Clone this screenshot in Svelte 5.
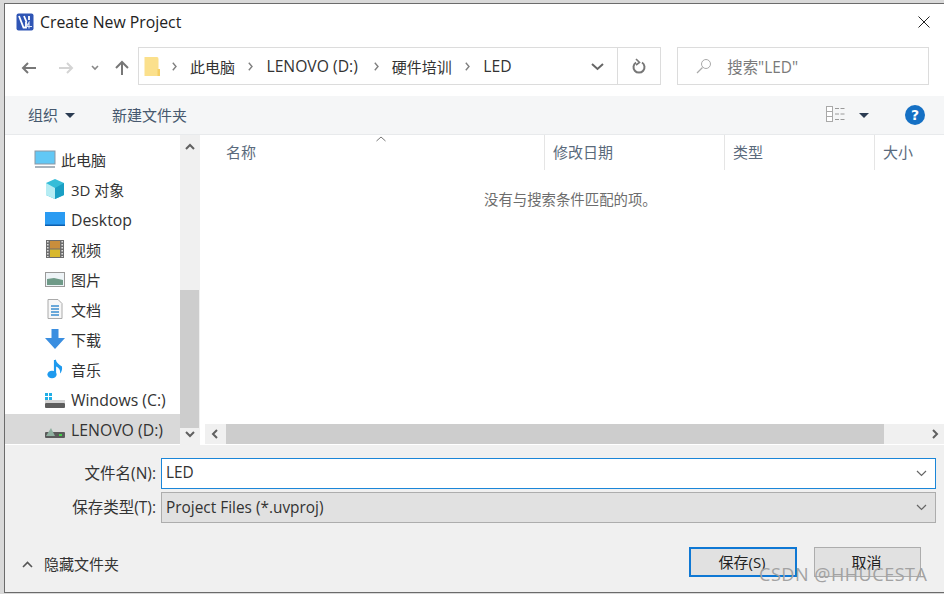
<script>
  const cjk = true;
  const columns = [
    { label: "名称", width: 345 },
    { label: "修改日期", width: 180 },
    { label: "类型", width: 150 },
    { label: "大小", width: 70 }
  ];
  const crumbs = [
    { label: "此电脑" },
    { label: "LENOVO (D:)", latin: true },
    { label: "硬件培训" },
    { label: "LED", latin: true }
  ];
  const navItems = [
    { label: "此电脑", icon: "pc", top: true },
    { label: "3D 对象", icon: "cube" },
    { label: "Desktop", icon: "desktop", latin: true },
    { label: "视频", icon: "video" },
    { label: "图片", icon: "picture" },
    { label: "文档", icon: "doc" },
    { label: "下载", icon: "download" },
    { label: "音乐", icon: "music" },
    { label: "Windows (C:)", icon: "win", latin: true },
    { label: "LENOVO (D:)", icon: "drive", selected: true, latin: true }
  ];
</script>

<div class="page" class:cjk>
  <div class="dialog">
    <header class="titlebar">
      <svg class="appicon" width="18" height="18" viewBox="0 0 18 18">
        <rect x="0.5" y="0.5" width="17" height="17" rx="2" fill="#2f55b5" />
        <path d="M3 3 L7.5 14.5 L10 14.5 L10 9 M8 3 L10.5 9 M13 3 L13 7" stroke="#fff" stroke-width="1.8" fill="none" />
        <path d="M13 15.5 L13 9.5 L10.5 13.5 H16" stroke="#dfe6f7" stroke-width="1.2" fill="none" />
      </svg>
      <span class="title">Create New Project</span>
      <svg class="close" width="12" height="12" viewBox="0 0 12 12">
        <path d="M0.5 0.5 L11.5 11.5 M11.5 0.5 L0.5 11.5" stroke="#222" stroke-width="1" />
      </svg>
    </header>

    <div class="navbar">
      <svg width="16" height="14" viewBox="0 0 16 14" class="back">
        <path d="M15 7 H2 M7 2 L2 7 L7 12" stroke="#777" stroke-width="2" fill="none" />
      </svg>
      <svg width="16" height="14" viewBox="0 0 16 14" class="forward">
        <path d="M1 7 H14 M9 2 L14 7 L9 12" stroke="#d4d4d4" stroke-width="2" fill="none" />
      </svg>
      <svg width="8" height="6" viewBox="0 0 8 6" class="recent">
        <path d="M1 1 L4 4 L7 1" stroke="#888" stroke-width="1.6" fill="none" />
      </svg>
      <svg width="16" height="15" viewBox="0 0 16 15" class="up">
        <path d="M8 15 V2 M2 8 L8 2 L14 8" stroke="#777" stroke-width="2" fill="none" />
      </svg>
      <div class="address">
        <svg width="16" height="21" viewBox="0 0 16 21" class="folder">
          <path d="M0.5 1 H13 Q14.5 1 14.5 3 V20 H0.5 Z" fill="#fbe08c" />
          <rect x="13.5" y="13" width="2.5" height="7" fill="#f5cf66" />
        </svg>
        {#each crumbs as crumb}
          <svg width="5" height="9" viewBox="0 0 5 9" class="sep">
            <path d="M0.8 0.8 L4 4.5 L0.8 8.2" stroke="#808080" stroke-width="1.4" fill="none" />
          </svg>
          <span class="crumb" class:latin={crumb.latin}>{crumb.label}</span>
        {/each}
        <svg width="13" height="8" viewBox="0 0 13 8" class="addr-chev">
          <path d="M1 1 L6.5 6 L12 1" stroke="#666" stroke-width="2" fill="none" />
        </svg>
        <div class="refresh">
          <svg width="14" height="16" viewBox="0 0 14 16">
            <path d="M4 4.5 A5.5 5.5 0 1 0 10 4.5" stroke="#777" stroke-width="2" fill="none" />
            <path d="M4 1 L7.5 4.5 L4 7" stroke="#777" stroke-width="1.6" fill="none" />
          </svg>
        </div>
      </div>
      <div class="search">
        <svg width="16" height="16" viewBox="0 0 16 16">
          <circle cx="10" cy="6" r="4.5" stroke="#aaa" stroke-width="1" fill="none" />
          <path d="M6.5 9.5 L1 15" stroke="#aaa" stroke-width="1.3" />
        </svg>
        <span>搜索"LED"</span>
      </div>
    </div>

    <div class="commands">
      <span class="cmd">组织</span>
      <i class="caret"></i>
      <span class="cmd newfolder">新建文件夹</span>
      <div class="spacer"></div>
      <svg width="21" height="16" viewBox="0 0 21 16" class="views">
        <rect x="0.5" y="0.5" width="6" height="15" fill="#fff" stroke="#a9a9a9" />
        <path d="M1 5.5 H6 M1 10.5 H6" stroke="#a9a9a9" />
        <path d="M9 2.5 H20 M9 8 H20 M9 13.5 H20" stroke="#9a9a9a" stroke-dasharray="4 1.5" />
      </svg>
      <i class="caret view-caret"></i>
      <div class="help">?</div>
    </div>

    <div class="main">
      <nav class="tree">
        {#each navItems as item}
          <div class="tree-row" class:selected={item.selected} class:top={item.top}>
            <svg width="22" height="22" viewBox="0 0 22 22">
              {#if item.icon === "pc"}
                <rect x="1" y="3" width="20" height="13" fill="#62c8f5" stroke="#8c97a3" />
                <rect x="1" y="18" width="20" height="2" fill="#a9b3bc" />
              {:else if item.icon === "cube"}
                <path d="M11 1 L20 5 V17 L11 21 L2 17 V5 Z" fill="#35bdd8" />
                <path d="M2 5 L11 10 V21 L2 17 Z" fill="#b5ecf3" />
                <path d="M11 10 L20 5 V17 L11 21 Z" fill="#1a9fc4" />
              {:else if item.icon === "desktop"}
                <rect x="1" y="4" width="20" height="14" fill="#2a9bf2" />
                <rect x="1" y="16.5" width="20" height="1.5" fill="#0c5fae" />
              {:else if item.icon === "video"}
                <rect x="2" y="2" width="18" height="18" fill="#6d6d6d" />
                <rect x="6" y="3" width="10" height="7.5" fill="#c98e3c" />
                <rect x="6" y="11.5" width="10" height="7.5" fill="#d8b82e" />
                <path d="M3.8 3 V19 M18.2 3 V19" stroke="#ddd" stroke-width="1.6" stroke-dasharray="1.5 1.5" />
              {:else if item.icon === "picture"}
                <rect x="1.5" y="4.5" width="19" height="14" fill="#eef4f7" stroke="#9a9a9a" />
                <path d="M3 11 L10 10 L19 12 V17 H3 Z" fill="#6f9a88" />
              {:else if item.icon === "doc"}
                <path d="M4 1.5 H14 L18 5.5 V20.5 H4 Z" fill="#f7f7f7" stroke="#aaa" />
                <path d="M7 8 H15 M7 11 H15 M7 14 H15 M7 17 H15" stroke="#3d8fd0" stroke-width="1.4" />
              {:else if item.icon === "download"}
                <path d="M7.5 1 H14.5 V10 H21 L11 21 L1 10 H7.5 Z" fill="#3a8ee0" />
              {:else if item.icon === "music"}
                <path d="M11 2 V16" stroke="#1e9aee" stroke-width="2.2" />
                <ellipse cx="8" cy="16.5" rx="4.6" ry="3.8" fill="#1e9aee" />
                <path d="M11 1 Q13 6 18 8.5 Q18.5 13 16 15.5 Q17 10 11 8 Z" fill="#1e9aee" />
              {:else if item.icon === "win"}
                <rect x="1" y="15" width="20" height="5" rx="1" fill="#5d5d5d" />
                <rect x="1" y="12" width="20" height="3" fill="#d5d5d5" />
                <rect x="1" y="5" width="3" height="3" fill="#20aee6" />
                <rect x="5" y="5" width="3" height="3" fill="#20aee6" />
                <rect x="1" y="9" width="3" height="3" fill="#20aee6" />
                <rect x="5" y="9" width="3" height="3" fill="#20aee6" />
              {:else}
                <rect x="1" y="14" width="20" height="6" rx="1" fill="#5a5a5a" />
                <rect x="15" y="16" width="3" height="2" fill="#44d04a" />
                <path d="M2 18 L7 10 L11 18 Z" fill="#8fb0a0" />
              {/if}
            </svg>
            <span class:latin={item.latin}>{item.label}</span>
          </div>
        {/each}
      </nav>

      <div class="vscroll">
        <svg width="10" height="7" viewBox="0 0 10 7" class="arrow">
          <path d="M1 6 L5 2 L9 6" stroke="#606060" stroke-width="2" fill="none" />
        </svg>
        <div class="vtrack"><div class="vthumb"></div></div>
        <svg width="10" height="7" viewBox="0 0 10 7" class="arrow">
          <path d="M1 1 L5 5 L9 1" stroke="#606060" stroke-width="2" fill="none" />
        </svg>
      </div>

      <section class="list">
        <div class="list-head">
          {#each columns as col, i}
            <div class="col" class:last={i === columns.length - 1} style="width: {col.width}px">{col.label}</div>
          {/each}
          <svg width="10" height="6" viewBox="0 0 10 6" class="sort">
            <path d="M0.5 5 L5 1 L9.5 5" stroke="#777" fill="none" />
          </svg>
        </div>
        <p class="empty">没有与搜索条件匹配的项。</p>
        <div class="hscroll">
          <svg width="7" height="10" viewBox="0 0 7 10">
            <path d="M6 1 L2 5 L6 9" stroke="#606060" stroke-width="2" fill="none" />
          </svg>
          <div class="htrack"><div class="hthumb"></div></div>
          <svg width="7" height="10" viewBox="0 0 7 10">
            <path d="M1 1 L5 5 L1 9" stroke="#606060" stroke-width="2" fill="none" />
          </svg>
        </div>
      </section>
    </div>

    <div class="form">
      <div class="field">
        <label for="fname">文件名(N):</label>
        <div class="input active">
          <input id="fname" value="LED" />
          <svg width="11" height="7" viewBox="0 0 11 7"><path d="M1 1 L5.5 5.5 L10 1" stroke="#666" stroke-width="1.2" fill="none" /></svg>
        </div>
      </div>
      <div class="field second">
        <span class="lbl">保存类型(T):</span>
        <div class="input select">
          <span>Project Files (*.uvproj)</span>
          <svg width="11" height="7" viewBox="0 0 11 7"><path d="M1 1 L5.5 5.5 L10 1" stroke="#666" stroke-width="1.2" fill="none" /></svg>
        </div>
      </div>
      <div class="actions">
        <svg width="11" height="7" viewBox="0 0 11 7" class="hide-chev"><path d="M1 6 L5.5 1.5 L10 6" stroke="#555" stroke-width="1.6" fill="none" /></svg>
        <span class="hide">隐藏文件夹</span>
        <div class="spacer"></div>
        <button class="primary">保存(S)</button>
        <button class="cancel">取消</button>
      </div>
      <span class="watermark">CSDN @HHUCESTA</span>
    </div>
  </div>
</div>

<style>
  :global(body) {
    margin: 0;
    background: #d9d9d9;
  }

  .page {
    width: 944px;
    height: 594px;
    padding: 3px 0 1px 4px;
    box-sizing: border-box;
    overflow: hidden;
    font-family: "Open Sans", "Noto Sans CJK SC", sans-serif;
    font-size: 15px;
    color: #333;
  }

  .dialog {
    height: 100%;
    background: #fff;
    border-top: 1px solid #6b6b6b;
    border-left: 1px solid #6b6b6b;
    border-bottom: 1px solid #6b6b6b;
    box-sizing: border-box;
    display: flex;
    flex-direction: column;
    position: relative;
  }

  .titlebar {
    height: 32px;
    display: flex;
    align-items: center;
    padding: 3px 14px 0 11px;
    box-sizing: border-box;
    flex: none;
  }

  .title {
    margin-left: 6px;
    font-size: 15.8px;
    color: #222;
  }

  .close {
    margin-left: auto;
  }

  .navbar {
    height: 60px;
    flex: none;
    display: flex;
    align-items: center;
    box-sizing: border-box;
    padding: 0 15px 0 16px;
  }

  .back,
  .forward,
  .recent,
  .up {
    margin-top: 3px;
  }

  .forward {
    margin-left: 21px;
  }

  .recent {
    margin-left: 17px;
  }

  .up {
    margin-left: 15px;
  }

  .address {
    margin-left: 8px;
    width: 524px;
    height: 38px;
    box-sizing: border-box;
    border: 1px solid #dcdcdc;
    display: flex;
    align-items: center;
    padding-left: 5px;
    color: #333;
  }

  .sep {
    margin-left: 12px;
    flex: none;
  }

  .crumb {
    margin-left: 13px;
    margin-right: 1.5px;
    font-size: 15px;
  }

  .crumb.latin {
    margin-right: 4px;
    font-size: 15.7px;
  }

  .addr-chev {
    margin-left: auto;
    margin-right: 13px;
    margin-top: 2px;
  }

  .refresh {
    width: 42px;
    height: 100%;
    border-left: 1px solid #dcdcdc;
    display: flex;
    align-items: center;
    justify-content: center;
  }

  .search {
    margin-left: 16px;
    width: 252px;
    height: 38px;
    box-sizing: border-box;
    border: 1px solid #dcdcdc;
    display: flex;
    align-items: center;
    padding-left: 18px;
    gap: 15px;
    color: #7a7a7a;
    font-size: 15.4px;
  }

  .commands {
    height: 39px;
    flex: none;
    background: #f5f6f7;
    border-bottom: 1px solid #e8eaec;
    box-sizing: border-box;
    display: flex;
    align-items: center;
    padding: 0 19px 0 23px;
  }

  .cmd {
    color: #46586e;
    font-size: 15px;
    margin-bottom: 2px;
  }

  .caret {
    width: 0;
    height: 0;
    border-left: 5px solid transparent;
    border-right: 5px solid transparent;
    border-top: 5px solid #2b3b52;
    margin-left: 7px;
  }

  .newfolder {
    margin-left: 37px;
  }

  .spacer {
    flex: 1;
  }

  .views {
    margin-bottom: 2px;
  }

  .view-caret {
    margin-left: 12px;
  }

  .help {
    margin-left: 36px;
    width: 20px;
    height: 20px;
    border-radius: 50%;
    background: #1570c4;
    color: #fff;
    font-family: "DejaVu Sans", sans-serif;
    font-weight: 700;
    font-size: 14px;
    line-height: 20px;
    text-align: center;
  }

  .main {
    flex: 1;
    min-height: 0;
    display: flex;
  }

  .tree {
    width: 175px;
    flex: none;
    padding-top: 9px;
    box-sizing: border-box;
  }

  .tree-row {
    height: 30px;
    display: flex;
    align-items: center;
    padding-left: 39px;
    gap: 5px;
    white-space: nowrap;
    color: #333;
    font-size: 15px;
  }

  .tree-row .latin {
    font-size: 15.8px;
    margin-top: 2px;
  }

  .tree-row.top {
    padding-left: 29px;
  }

  .tree-row.selected {
    background: #d9d9d9;
  }

  .vscroll {
    width: 20px;
    flex: none;
    background: #f0f0f0;
    display: flex;
    flex-direction: column;
    align-items: center;
    padding: 8px 0 7px;
    box-sizing: border-box;
  }

  .arrow {
    flex: none;
  }

  .vtrack {
    flex: 1;
    width: 100%;
    position: relative;
  }

  .vthumb {
    position: absolute;
    left: 0;
    right: 1px;
    top: 140px;
    height: 138px;
    background: #cdcdcd;
  }

  .list {
    flex: 1;
    min-width: 0;
    display: flex;
    flex-direction: column;
    position: relative;
    overflow: hidden;
  }

  .list-head {
    display: flex;
    height: 35px;
    flex: none;
    font-size: 15px;
    color: #5a6a7c;
  }

  .col {
    flex: none;
    box-sizing: border-box;
    padding: 6px 0 0 8px;
    border-right: 1px solid #e5e5e5;
  }

  .col:first-child {
    padding-left: 26px;
  }

  .col.last {
    border-right: 0;
  }

  .sort {
    position: absolute;
    left: 176px;
    top: 1px;
  }

  .empty {
    margin: 18px 0 0;
    text-indent: 284px;
    font-size: 14.4px;
    color: #6d6d6d;
    flex: 1;
  }

  .hscroll {
    height: 20px;
    flex: none;
    margin-left: 5px;
    margin-bottom: 1px;
    background: #f0f0f0;
    display: flex;
    align-items: center;
    padding: 0 5px 0 6px;
    gap: 8px;
  }

  .htrack {
    flex: 1;
    height: 100%;
  }

  .hthumb {
    width: 658px;
    height: 100%;
    background: #cdcdcd;
  }

  .form {
    height: 147px;
    flex: none;
    background: #f0f0f0;
    box-sizing: border-box;
    padding-top: 13px;
    display: flex;
    flex-direction: column;
    position: relative;
  }

  .field {
    display: flex;
    align-items: center;
    height: 31px;
  }

  .field.second {
    margin-top: 3px;
  }

  .field label,
  .lbl {
    width: 151px;
    text-align: right;
    font-size: 15.5px;
    color: #333;
    flex: none;
    margin-bottom: 2px;
  }

  .input {
    width: 775px;
    margin-left: 5px;
    height: 31px;
    box-sizing: border-box;
    display: flex;
    align-items: center;
    padding: 0 8px 0 4px;
    justify-content: space-between;
    font-size: 15.4px;
  }

  .input > input {
    margin-bottom: 2px;
  }

  .input.active {
    background: #fff;
    border: 1px solid #1b86d8;
  }

  .input.select {
    background: #e1e1e1;
    border: 1px solid #adadad;
    color: #333;
  }

  input {
    border: 0;
    outline: 0;
    padding: 0;
    background: transparent;
    font: inherit;
    color: #333;
    width: 300px;
  }

  .actions {
    display: flex;
    align-items: center;
    padding: 0 23px 0 17px;
    margin-top: 24px;
    height: 30px;
  }

  .hide {
    margin-left: 11px;
    margin-top: 3px;
    font-size: 15px;
    color: #333;
  }

  .hide-chev {
    margin-top: 5px;
  }

  button {
    width: 107px;
    height: 30px;
    box-sizing: border-box;
    background: #e1e1e1;
    font: inherit;
    font-size: 15px;
    color: #222;
    padding: 0 2px 2px 0;
  }

  .primary {
    border: 2px solid #0f78d4;
    width: 108px;
  }

  .cancel {
    margin-left: 17px;
    border: 1px solid #adadad;
  }

  .watermark {
    position: absolute;
    left: 754px;
    top: 117px;
    font-size: 18px;
    letter-spacing: 0.55px;
    color: #a2a2a2;
    white-space: nowrap;
  }
</style>
